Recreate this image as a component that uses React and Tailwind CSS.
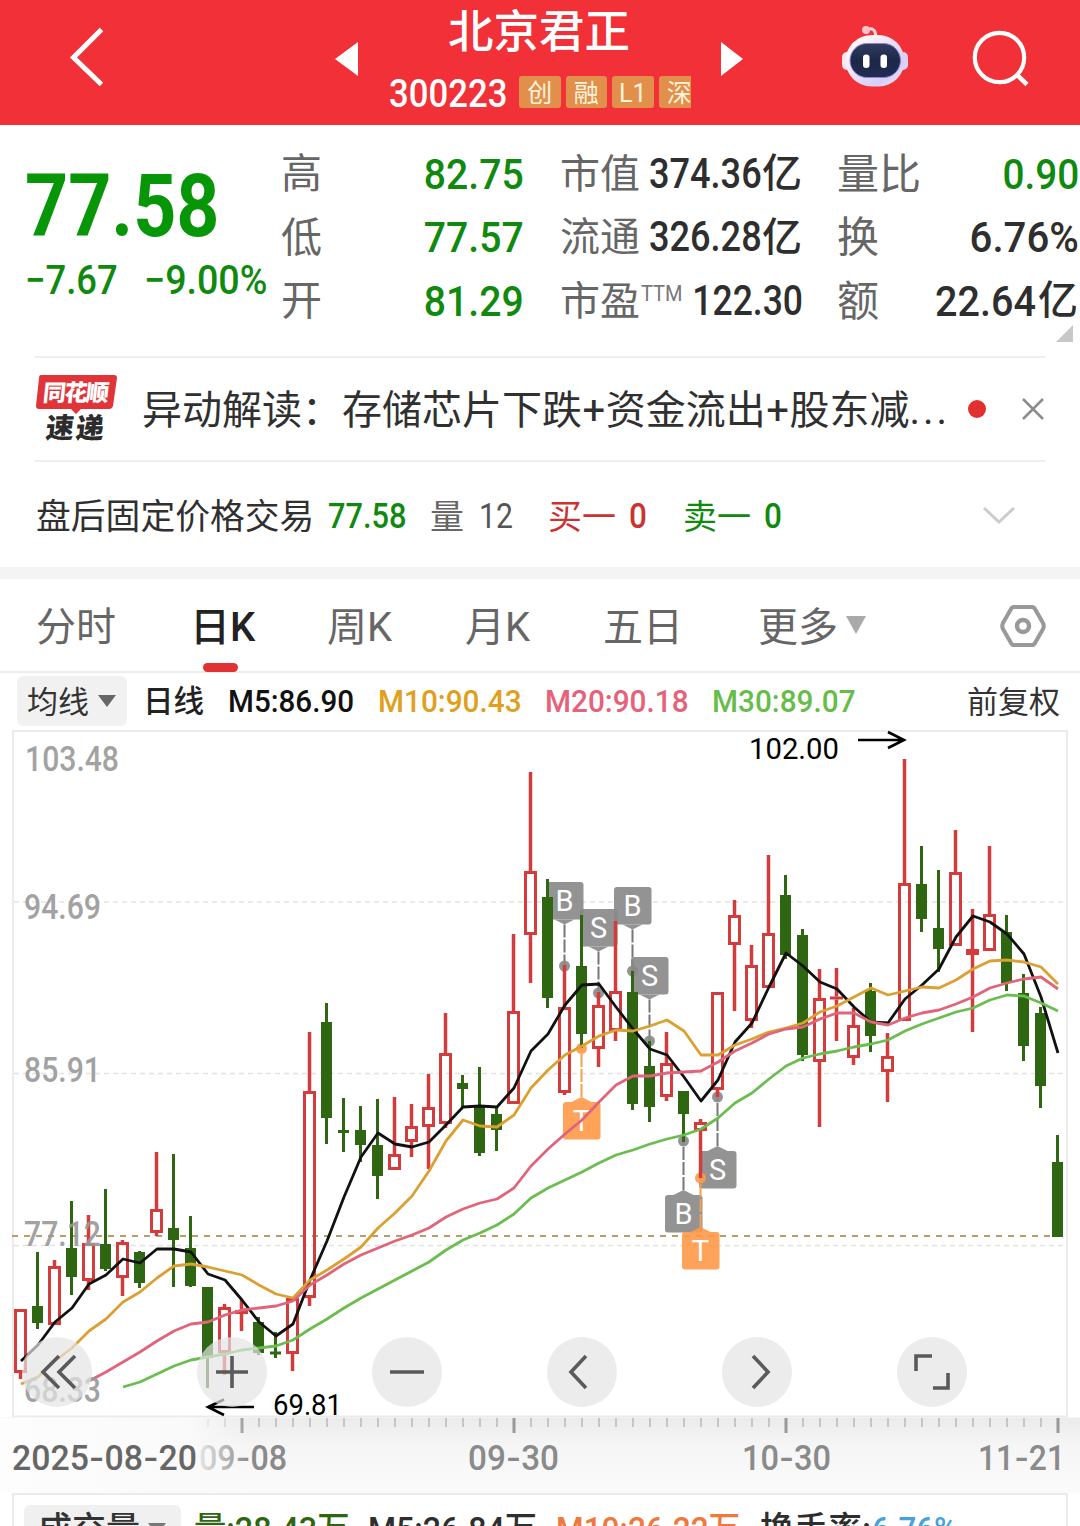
import React from 'react'

// [open/close top, open/close bottom, high, low, type] in chart pixels
// r = hollow red, g = solid green, f = solid red
const CANDLES = [
  [1309, 1373, 1309, 1379, 'r'],
  [1306, 1323, 1252, 1329, 'g'],
  [1266, 1325, 1260, 1325, 'r'],
  [1248, 1277, 1201, 1295, 'g'],
  [1243, 1281, 1215, 1290, 'r'],
  [1244, 1269, 1189, 1271, 'g'],
  [1242, 1278, 1240, 1296, 'r'],
  [1252, 1283, 1251, 1288, 'g'],
  [1209, 1233, 1152, 1236, 'r'],
  [1228, 1240, 1154, 1287, 'g'],
  [1248, 1286, 1216, 1287, 'g'],
  [1287, 1358, 1287, 1388, 'g'],
  [1307, 1353, 1304, 1375, 'r'],
  [1310, 1314, 1300, 1331, 'f'],
  [1322, 1353, 1317, 1355, 'g'],
  [1351.5, 1354.5, 1332, 1358, 'g'],
  [1298, 1354, 1298, 1371, 'r'],
  [1091, 1298, 1032, 1306, 'r'],
  [1022, 1118, 1003, 1144, 'g'],
  [1130, 1133, 1098, 1152, 'g'],
  [1130, 1145, 1106, 1162, 'g'],
  [1145, 1176, 1099, 1199, 'g'],
  [1154, 1170, 1097, 1170, 'r'],
  [1126, 1142, 1104, 1157, 'r'],
  [1107, 1127, 1074, 1169, 'r'],
  [1053, 1124, 1013, 1128, 'r'],
  [1083, 1089, 1075, 1107, 'g'],
  [1107, 1153, 1067, 1156, 'g'],
  [1114, 1130, 1106, 1151, 'g'],
  [1011, 1104, 934, 1104, 'r'],
  [871, 935, 772, 983, 'r'],
  [897, 998, 879, 1008, 'g'],
  [1007, 1093, 965, 1095, 'r'],
  [966, 1034, 915, 1048, 'g'],
  [1005, 1049, 992, 1067, 'r'],
  [991, 1031, 921, 1041, 'r'],
  [992, 1104, 971, 1110, 'g'],
  [1066, 1107, 1041, 1122, 'g'],
  [1063, 1097, 1032, 1101, 'r'],
  [1091, 1114, 1091, 1142, 'g'],
  [1122, 1131, 1119, 1178, 'r'],
  [992, 1090, 992, 1097, 'r'],
  [915, 945, 900, 1011, 'r'],
  [965, 1021, 945, 1028, 'r'],
  [933, 988, 855, 988, 'r'],
  [895, 955, 875, 959, 'g'],
  [935, 1055, 929, 1061, 'g'],
  [998, 1062, 969, 1127, 'r'],
  [996.5, 999.5, 968, 1041, 'f'],
  [1025, 1058, 1008, 1065, 'r'],
  [991, 1036, 983, 1052, 'g'],
  [1056, 1072, 1033, 1102, 'r'],
  [883, 1021, 759, 1021, 'r'],
  [884, 919, 846, 932, 'g'],
  [928, 949, 870, 972, 'g'],
  [872, 946, 830, 946, 'r'],
  [949, 955, 909, 1032, 'f'],
  [914, 951, 846, 951, 'r'],
  [932, 983, 915, 991, 'g'],
  [993, 1046, 974, 1061, 'g'],
  [1013, 1086, 1007, 1108, 'g'],
  [1162, 1237, 1135, 1237, 'g'],
]

const M5 = [
  1361, 1345, 1322, 1308, 1284, 1275, 1259, 1263, 1249, 1249, 1252, 1274, 1280, 1300, 1322, 1336,
  1324, 1280, 1241, 1197, 1157, 1133, 1144, 1147, 1142, 1125, 1107, 1106, 1107, 1088, 1051, 1034,
  1005, 985, 984, 1007, 1029, 1049, 1055, 1077, 1101, 1080, 1042, 1023, 987, 953, 966, 982,
  989, 1007, 1022, 1023, 999, 985, 969, 937, 916, 922, 934, 954, 997, 1053,
]
const M10 = [
  1384, 1377, 1361, 1348, 1331, 1319, 1302, 1292, 1278, 1266, 1264, 1267, 1271, 1275, 1285, 1294,
  1298, 1280, 1270, 1259, 1247, 1228, 1213, 1196, 1171, 1141, 1120, 1126, 1127, 1115, 1088, 1070,
  1055, 1046, 1036, 1030, 1031, 1026, 1020, 1031, 1055, 1055, 1045, 1039, 1032, 1028, 1023, 1012,
  1006, 997, 988, 995, 991, 987, 988, 980, 969, 961, 960, 962, 967, 984,
]
const M20 = [
  1381, 1372, 1362, 1352, 1341, 1331, 1324, 1322, 1315, 1310, 1308, 1306, 1301, 1285, 1275, 1264,
  1255, 1248, 1241, 1235, 1228, 1217, 1209, 1203, 1199, 1188, 1166, 1149, 1134, 1120, 1102, 1085,
  1076, 1076, 1073, 1072, 1071, 1062, 1051, 1043, 1034, 1029, 1027, 1019, 1013, 1013, 1022, 1025,
  1018, 1013, 1010, 1004, 997, 988, 983, 979, 977, 989,
]
const M30 = [
  1387, 1382, 1374, 1366, 1360, 1357, 1354, 1350, 1348, 1346, 1340, 1329, 1319, 1308, 1298, 1289,
  1280, 1271, 1262, 1250, 1240, 1233, 1225, 1214, 1198, 1188, 1180, 1172, 1163, 1155, 1150, 1144,
  1139, 1135, 1129, 1118, 1103, 1093, 1079, 1066, 1058, 1054, 1051, 1047, 1044, 1040, 1031, 1024,
  1018, 1012, 1008, 1000, 995, 996, 1003, 1011,
]

// label, candle x, box top, dot y
const MARKERS = [
  ['B', 564.5, 882, 966],
  ['S', 598.5, 909, 993],
  ['B', 632.5, 887, 971],
  ['S', 649.5, 957, 1041],
  ['S', 717.5, 1151, 1097],
  ['B', 683.5, 1195, 1141],
  ['T', 581.5, 1102, 1048.5],
  ['T', 700.5, 1232, 1178],
]

const PRICE_LABELS = [
  ['103.48', 25, 94, 771],
  ['94.69', 24, 77, 919],
  ['85.91', 24, 77, 1082],
  ['77.12', 24, 77, 1246],
  ['68.33', 24, 77, 1402],
]

const DATES = [
  ['09-08', 199, 88],
  ['09-30', 468, 91],
  ['10-30', 742, 89],
  ['11-21', 978, 87],
]

const candleX = (i) => 20.5 + i * 17

const toPoints = (values) => {
  const start = CANDLES.length - values.length
  return values.map((y, i) => `${candleX(start + i) + 0.5},${y}`).join(' ')
}

// Digits squeezed horizontally inside a box of fixed width
function Num({ box, className, children }) {
  return (
    <span className={`inline-flex shrink-0 whitespace-nowrap ${box}`}>
      <span className={className}>{children}</span>
    </span>
  )
}

function Tag({ children }) {
  return (
    <span className="flex h-8 w-[41.5px] shrink-0 items-center justify-center rounded-[3px] bg-[#e28f4c] pt-[2px] text-[25px] leading-none text-[#fff3dc]">
      {children}
    </span>
  )
}

function Header() {
  return (
    <header className="flex h-[125px] bg-[#f13037] text-white">
      <svg className="mt-[26px] ml-[66px] h-[64px] w-[40px] shrink-0" viewBox="66 26 40 64" fill="none">
        <path d="M101.500 29.500 73.500 57.500 101.500 84.500" stroke="#fff" strokeWidth="5" />
      </svg>
      <svg className="mt-[41px] ml-[229px] h-[36px] w-[24px] shrink-0" viewBox="0 0 24 36">
        <path d="M0 18 23 1v34z" fill="#fff" />
      </svg>
      <div className="ml-[30px] flex w-[302px] shrink-0 flex-col overflow-hidden">
        <h1 className="mt-[9px] ml-[59px] text-[45.5px] leading-[47px] font-medium whitespace-nowrap">北京君正</h1>
        <div className="mt-[17px] flex h-[38px] items-center">
          <Num box="w-[130px] pt-[4px]" className="origin-left scale-x-[0.89] text-[39px] leading-none font-medium">
            300223
          </Num>
          <div className="flex gap-[5px]">
            <Tag>创</Tag>
            <Tag>融</Tag>
            <Tag>L1</Tag>
            <Tag>深</Tag>
          </div>
        </div>
      </div>
      <svg className="mt-[41px] ml-[30px] h-[36px] w-[24px] shrink-0" viewBox="0 0 24 36">
        <path d="M22 18 0 1v34z" fill="#fff" />
      </svg>
      <svg className="mt-[22px] ml-[93px] h-[70px] w-[76px] shrink-0" viewBox="838 22 76 70">
        <defs>
          <linearGradient id="shell" x1="0" y1="0" x2="1" y2="1">
            <stop offset="0.2" stopColor="#fff5f8" />
            <stop offset="0.75" stopColor="#d5cdf6" />
            <stop offset="1" stopColor="#fbe9f4" />
          </linearGradient>
          <linearGradient id="visor" x1="0" y1="0" x2="0" y2="1">
            <stop offset="0" stopColor="#323c60" />
            <stop offset="0.5" stopColor="#1d2748" />
            <stop offset="1" stopColor="#222b52" />
          </linearGradient>
        </defs>
        <path d="M866 30c6-3 10 0 9.500 6" stroke="#ffd3d9" strokeWidth="3" fill="none" />
        <circle cx="866" cy="30" r="4" fill="#ffc3ca" />
        <rect x="842" y="52" width="10" height="18" rx="5" fill="#f7e6f4" />
        <rect x="898" y="52" width="10" height="18" rx="5" fill="#ddd0f5" />
        <rect x="845.500" y="35" width="59" height="51.500" rx="26" fill="url(#shell)" />
        <rect x="850" y="43.500" width="50.500" height="34" rx="17" fill="url(#visor)" stroke="#8f83d6" strokeWidth="1" />
        <rect x="863" y="54.500" width="6.500" height="13.500" rx="3" fill="#fff" />
        <rect x="880.500" y="54.500" width="6.500" height="13.500" rx="3" fill="#fff" />
      </svg>
      <svg className="mt-[26px] ml-[56px] h-[64px] w-[64px] shrink-0" viewBox="970 26 64 64" fill="none">
        <circle cx="999.500" cy="57.500" r="24.700" stroke="#fff" strokeWidth="4.200" />
        <path d="M1016 74l11 10.500" stroke="#fff" strokeWidth="4.500" />
      </svg>
    </header>
  )
}

function Quote() {
  const row = 'flex h-[63.5px] items-center'
  return (
    <section className="relative flex h-[231px] pt-[16px] text-[40px] leading-none text-[#666]">
      <div className="ml-[25px] flex w-[256px] shrink-0 flex-col text-[#079607]">
        <Num box="mt-[21px] h-[88px] w-[200px]" className="origin-left scale-x-[0.855] text-[88px] leading-none font-bold">
          77.58
        </Num>
        <div className="mt-[11px] flex text-[40px] font-medium text-[#0f8a0f]">
          <Num box="w-[119px]" className="origin-left scale-x-[0.91]">
            −7.67
          </Num>
          <Num box="w-[130px]" className="origin-left scale-x-[0.94]">
            −9.00%
          </Num>
        </div>
      </div>
      <div className="w-[279px] shrink-0">
        {[
          ['高', '82.75'],
          ['低', '77.57'],
          ['开', '81.29'],
        ].map(([label, value]) => (
          <div key={label} className={row}>
            <span className="w-[125px] pt-[4px] text-[41px]">{label}</span>
            <Num box="w-[118px] justify-end pt-[3px]" className="origin-right scale-x-[0.91] text-[43px] font-medium text-[#0f8a0f]">
              {value}
            </Num>
          </div>
        ))}
      </div>
      <div className="w-[277px] shrink-0 text-[#2e2e2e]">
        {[
          ['市值', '374.36'],
          ['流通', '326.28'],
        ].map(([label, value]) => (
          <div key={label} className={row}>
            <span className="w-[89px] pt-[4px] text-[#666]">{label}</span>
            <Num box="w-[113px] pt-[2px]" className="origin-left scale-x-[0.86] text-[42px] font-medium">
              {value}
            </Num>
            <span className="pt-[3px] font-medium">亿</span>
          </div>
        ))}
        <div className={row}>
          <span className="pt-[4px] text-[#666]">市盈</span>
          <span className="mt-[-12px] w-[43px] pl-[1px] text-[22px] text-[#777]">
            <span className="inline-block origin-left scale-x-[0.91]">TTM</span>
          </span>
          <Num box="w-[120px] justify-end pt-[3px]" className="origin-right scale-x-[0.845] text-[42px] font-medium">
            122.30
          </Num>
        </div>
      </div>
      <div className="w-[242px] shrink-0 text-[#2e2e2e]">
        <div className={`${row} justify-between`}>
          <span className="pt-[4px] text-[42px] text-[#666]">量比</span>
          <Num box="justify-end pt-[3px]" className="origin-right scale-x-[0.9] text-[43px] font-medium text-[#0f8a0f]">
            0.90
          </Num>
        </div>
        <div className={`${row} justify-between`}>
          <span className="pt-[4px] text-[42px] text-[#666]">换</span>
          <Num box="justify-end pt-[2px]" className="origin-right scale-x-[0.935] text-[43px] font-medium">
            6.76%
          </Num>
        </div>
        <div className={row}>
          <span className="w-[98px] pt-[4px] text-[42px] text-[#666]">额</span>
          <Num box="w-[103px] pt-[3px]" className="origin-left scale-x-[0.92] text-[43px] font-medium">
            22.64
          </Num>
          <span className="pt-[3px] font-medium">亿</span>
        </div>
      </div>
      <svg className="absolute top-[200px] left-[1056px] h-[17px] w-[17px]" viewBox="0 0 17 17">
        <path d="M17 0v17H0z" fill="#c8c8c8" />
      </svg>
    </section>
  )
}

function News() {
  return (
    <section className="mx-[35px] flex h-[106px] items-center border-y-2 border-[#efefef] leading-none">
      <div className="relative h-[70px] w-[107px] shrink-0">
        <svg className="absolute top-0 left-0 h-[42px] w-[84px]" viewBox="0 0 84 42">
          <path d="M6 1h73q3 0 3 3l-4 28q-1 3-4 3H46l-5 5-5-5H4q-3 0-3-3L4 4q0-3 2-3z" fill="#e13439" />
        </svg>
        <span className="absolute top-[8px] left-[8px] inline-block -skew-x-6 text-[23px] font-black tracking-[-1.5px] whitespace-nowrap text-white">
          同花顺
        </span>
        <span className="absolute top-[41px] left-[11px] inline-block -skew-x-6 text-[28px] font-black tracking-[2px] whitespace-nowrap text-[#2c2c2c]">
          速递
        </span>
      </div>
      <p className="w-[836px] pt-[3px] text-[40px] whitespace-nowrap text-[#303030]">
        异动解读：存储芯片下跌<span className="px-[0.5px]">+</span>资金流出<span className="px-[0.5px]">+</span>股东减
        <span className="tracking-[3px]">...</span>
      </p>
      <span className="ml-[-7px] h-[18px] w-[18px] shrink-0 rounded-full bg-[#e23030]" />
      <svg className="ml-[35px] h-[24px] w-[24px] shrink-0" viewBox="0 0 24 24">
        <path d="M2 2l20 20M22 2 2 22" stroke="#8c8c8c" strokeWidth="2.500" />
      </svg>
    </section>
  )
}

function AfterHours() {
  return (
    <section className="flex h-[105px] items-center pl-[36px] text-[34px] leading-none">
      <span className="w-[292px] pt-[5px] text-[34.8px] text-[#303030]">盘后固定价格交易</span>
      <Num box="w-[102px] pt-[3px]" className="origin-left scale-x-[0.88] text-[35px] font-medium text-[#0f8a0f]">
        77.58
      </Num>
      <span className="w-[49px] pt-[4px] text-[#666]">量</span>
      <Num box="w-[69px] pt-[3px]" className="origin-left scale-x-[0.86] text-[35px] text-[#555]">
        12
      </Num>
      <span className="w-[81px] pt-[4px] text-[#cc3232]">买一</span>
      <Num box="w-[54px] pt-[3px]" className="origin-left scale-x-[0.9] text-[35px] font-medium text-[#cc3232]">
        0
      </Num>
      <span className="w-[81px] pt-[4px] text-[#0f8a0f]">卖一</span>
      <Num box="w-[218px] pt-[3px]" className="origin-left scale-x-[0.9] text-[35px] font-medium text-[#0f8a0f]">
        0
      </Num>
      <svg className="mt-[2px] h-[20px] w-[34px]" viewBox="0 0 34 20" fill="none">
        <path d="M2 2l15 14L32 2" stroke="#ccc" strokeWidth="3" />
      </svg>
    </section>
  )
}

function Tabs() {
  return (
    <nav className="flex h-[94px] items-center border-b-2 border-[#ececec] pl-[36px] text-[40px] leading-none text-[#666]">
      <span className="w-[154px] pt-[6px]">分时</span>
      <div className="relative flex h-full w-[137px] items-center pt-[6px] font-medium text-[#222]">
        日K
        <span className="absolute bottom-[-1px] left-[13px] h-[9px] w-[35px] rounded-full bg-[#e03232]" />
      </div>
      <span className="w-[138px] pt-[6px]">周K</span>
      <span className="w-[138px] pt-[6px]">月K</span>
      <span className="w-[155px] pt-[6px]">五日</span>
      <span className="w-[88px] pt-[6px]">更多</span>
      <svg className="h-[18px] w-[20px]" viewBox="0 0 20 18">
        <path d="M0 0h20L10 18z" fill="#aaa" />
      </svg>
      <svg className="mt-[2px] ml-[134px] h-[46px] w-[46px]" viewBox="0 0 46 46" fill="none">
        <path
          d="M14 4h18q2 0 3 2l8 14q1.500 3 0 6l-8 14q-1 2-3 2H14q-2 0-3-2L3 26q-1.500-3 0-6l8-14q1-2 3-2z"
          stroke="#999"
          strokeWidth="4"
        />
        <circle cx="23" cy="23" r="6" stroke="#999" strokeWidth="4.500" />
      </svg>
    </nav>
  )
}

function Averages() {
  return (
    <div className="flex h-[57px] items-center pl-[17px] text-[31px] leading-none text-[#333]">
      <div className="mt-[-1px] flex h-[50px] w-[110px] shrink-0 items-center gap-[9px] rounded-md bg-[#f1f1f1] pl-[10px]">
        <span className="pt-[2px]">均线</span>
        <svg className="h-[12px] w-[18px]" viewBox="0 0 18 12">
          <path d="M0 0h18L9 12z" fill="#666" />
        </svg>
      </div>
      <span className="ml-[16px] w-[85px] pt-[2px] text-[30.5px] font-medium text-[#222]">日线</span>
      <Num box="w-[150px] mt-[-2px]" className="origin-left scale-x-[0.925] text-[32px] font-medium text-[#111]">
        M5:86.90
      </Num>
      <Num box="w-[167px] mt-[-2px]" className="origin-left scale-x-[0.93] text-[32px] font-medium text-[#dfa020]">
        M10:90.43
      </Num>
      <Num box="w-[167px] mt-[-2px]" className="origin-left scale-x-[0.93] text-[32px] font-medium text-[#e5627a]">
        M20:90.18
      </Num>
      <Num box="w-[255px] mt-[-2px]" className="origin-left scale-x-[0.93] text-[32px] font-medium text-[#68bd4a]">
        M30:89.07
      </Num>
      <span className="shrink-0 pt-[2px]">前复权</span>
    </div>
  )
}

function Candle({ index, data }) {
  const [top, bottom, high, low, type] = data
  const x = candleX(index)
  if (type === 'g') {
    return (
      <g fill="#2f6612">
        <rect x={x - 1.5} y={high} width="3" height={low - high} />
        <rect x={x - 5.5} y={top} width="11" height={bottom - top} />
      </g>
    )
  }
  return (
    <g fill="#d23c3c">
      {high < top && <rect x={x - 1.75} y={high} width="3.500" height={top - high} />}
      {low > bottom && <rect x={x - 1.75} y={bottom} width="3.500" height={low - bottom} />}
      {type === 'f' ? (
        <rect x={x - 6.5} y={top} width="13" height={bottom - top} />
      ) : (
        <rect x={x - 5} y={top + 1.5} width="10" height={bottom - top - 3} fill="none" stroke="#d23c3c" strokeWidth="3" />
      )}
    </g>
  )
}

function Marker({ label, x, top, dot }) {
  const below = top > dot
  const color = label === 'T' ? '#ff9a4a' : '#888'
  const edge = below ? top : top + 37.5
  const tip = below ? top - 5 : top + 42.5
  return (
    <g>
      <line x1={x} y1={tip} x2={x} y2={dot} stroke={label === 'T' ? '#f5a04e' : '#777'} strokeWidth="2" strokeDasharray="13 2" />
      <g fill={color} opacity="0.9">
        <rect x={x - 18.5} y={top} width="37.500" height="37.500" rx="3" />
        <path d={`M${x - 10} ${edge}L${x} ${tip}L${x + 10} ${edge}z`} />
      </g>
      <circle cx={x} cy={dot} r="5.500" fill={color} opacity="0.9" />
      <text x={x} y={top + 29} textAnchor="middle" fontSize="29" fill="#fff">
        {label}
      </text>
    </g>
  )
}

function DateLabel({ text, x, width, fill }) {
  return (
    <text x={x} y="1470" fontSize="34.500" fontWeight="500" fill={fill} textLength={width} lengthAdjust="spacingAndGlyphs">
      {text.split('-').map((part, i) => (
        <React.Fragment key={i}>
          {i > 0 && <tspan className="font-['Inter']">-</tspan>}
          {part}
        </React.Fragment>
      ))}
    </text>
  )
}

function Chart() {
  return (
    <svg className="block h-[763px] w-[1080px]" viewBox="0 730 1080 763">
      <defs>
        <linearGradient id="axis" x1="0" y1="0" x2="0" y2="1">
          <stop offset="0" stopColor="#ebebeb" />
          <stop offset="0.35" stopColor="#f5f5f5" />
          <stop offset="1" stopColor="#fbfbfb" />
        </linearGradient>
        <linearGradient id="fade" x1="0" y1="0" x2="1" y2="0">
          <stop offset="0" stopColor="#fdfdfd" />
          <stop offset="0.75" stopColor="#fafafa" />
          <stop offset="1" stopColor="#f8f8f8" stopOpacity="0" />
        </linearGradient>
      </defs>

      {[902, 1073.5, 1245.5].map((y) => (
        <line key={y} x1="14" x2="1066" y1={y} y2={y} stroke="#e3e3e3" strokeWidth="1.500" strokeDasharray="5 4" />
      ))}
      <rect x="13" y="731" width="1054" height="685.500" fill="none" stroke="#ebebeb" strokeWidth="2" />
      <line x1="12" x2="1066" y1="1236" y2="1236" stroke="#b99f64" strokeWidth="1.800" strokeDasharray="6 6" />

      {MARKERS.map(([label, x, top, dot]) => (
        <Marker key={`${label}${x}`} label={label} x={x} top={top} dot={dot} />
      ))}
      {CANDLES.map((c, i) => (
        <Candle key={i} index={i} data={c} />
      ))}

      <g fill="none" strokeWidth="2.800" strokeLinejoin="round">
        <polyline points={toPoints(M5)} stroke="#111" />
        <polyline points={toPoints(M10)} stroke="#dba032" />
        <polyline points={toPoints(M20)} stroke="#e0647a" />
        <polyline points={toPoints(M30)} stroke="#6cbd4f" />
      </g>

      {PRICE_LABELS.map(([text, x, width, y]) => (
        <text
          key={text}
          x={x}
          y={y}
          fontSize="35"
          fontWeight="500"
          fill="#999"
          opacity="0.9"
          textLength={width}
          lengthAdjust="spacingAndGlyphs"
        >
          {text}
        </text>
      ))}

      <g fill="none" stroke="#000" strokeWidth="2.600">
        <path d="M858 740h46M888 732l16 8-16 8" />
        <path d="M254 1407h-46M224 1399.500l-16 7.500 16 8" />
      </g>
      <text x="749" y="759" fontSize="30" textLength="90" lengthAdjust="spacingAndGlyphs">
        102.00
      </text>
      <text x="273" y="1415" fontSize="30" textLength="69" lengthAdjust="spacingAndGlyphs">
        69.81
      </text>

      <rect x="0" y="1417.500" width="1080" height="76" fill="url(#axis)" />
      {Array.from({ length: 51 }, (_, i) => {
        const major = (i - 2) % 16 === 0
        return (
          <rect
            key={i}
            x={208 + i * 17 - (major ? 1.5 : 1)}
            y="1418"
            width={major ? 3 : 2}
            height={major ? 15 : 9}
            fill={major ? '#999' : '#c6c6c6'}
          />
        )
      })}
      {DATES.map(([text, x, width]) => (
        <DateLabel key={text} text={text} x={x} width={width} fill="#8a8a8a" />
      ))}
      <rect x="0" y="1417.500" width="250" height="76" fill="url(#fade)" />
      <DateLabel text="2025-08-20" x={12} width={185} fill="#666" />
    </svg>
  )
}

const CONTROLS = [
  'M37 19 21 35l16 16M53 19 37 35l16 16',
  'M35 19v32M19 35h32',
  'M18 35h34',
  'M39 19 24 35l15 16',
  'M31 19l15 16-15 16',
  'M19 34V19h16M51 36v15H36',
]

function Controls() {
  return (
    <div className="absolute top-[607px] left-[22px] flex gap-[105px]">
      {CONTROLS.map((d) => (
        <button key={d} className="h-[70px] w-[70px] rounded-full bg-[#e4e4e4]/70">
          <svg viewBox="0 0 70 70" fill="none">
            <path d={d} stroke="#5a5a5a" strokeWidth="3.600" />
          </svg>
        </button>
      ))}
    </div>
  )
}

function Volume() {
  return (
    <section className="mx-[12px] flex h-[80px] border-2 border-[#ebebeb] pt-[10px] pl-[10px] text-[34px] leading-none whitespace-nowrap">
      <div className="flex h-[50px] w-[157px] shrink-0 items-center gap-[8px] rounded-md bg-[#f0f0f0] pl-[14px] font-medium text-[#333]">
        <span className="mt-[-2px]">成交量</span>
        <svg className="mt-[-3px] h-[12px] w-[18px]" viewBox="0 0 18 12">
          <path d="M0 0h18L9 12z" fill="#777" />
        </svg>
      </div>
      <div className="mt-[-1px] flex h-[50px] items-center font-medium">
        <span className="ml-[13px] w-[174px] text-[#2f6612]">
          <span className="inline-block origin-left scale-x-[0.95]">量:28.43万</span>
        </span>
        <span className="w-[188px] text-[#2e2e2e]">
          <span className="inline-block origin-left scale-x-[0.945]">M5:26.84万</span>
        </span>
        <span className="w-[204px] text-[#f0783c]">
          <span className="inline-block origin-left scale-x-[0.93]">M10:26.22万</span>
        </span>
        <span className="w-[112px] text-[#2e2e2e]">换手率:</span>
        <span className="inline-block origin-left scale-x-[0.92] text-[#45a3dc]">6.76%</span>
      </div>
    </section>
  )
}

export default function App() {
  return (
    <div className="h-[1526px] w-[1080px] overflow-hidden bg-white font-['Roboto','Noto_Sans_CJK_SC',sans-serif]">
      <Header />
      <Quote />
      <News />
      <AfterHours />
      <div className="h-[12px] bg-[#f4f4f4]" />
      <Tabs />
      <Averages />
      <div className="relative">
        <Chart />
        <Controls />
      </div>
      <Volume />
    </div>
  )
}
